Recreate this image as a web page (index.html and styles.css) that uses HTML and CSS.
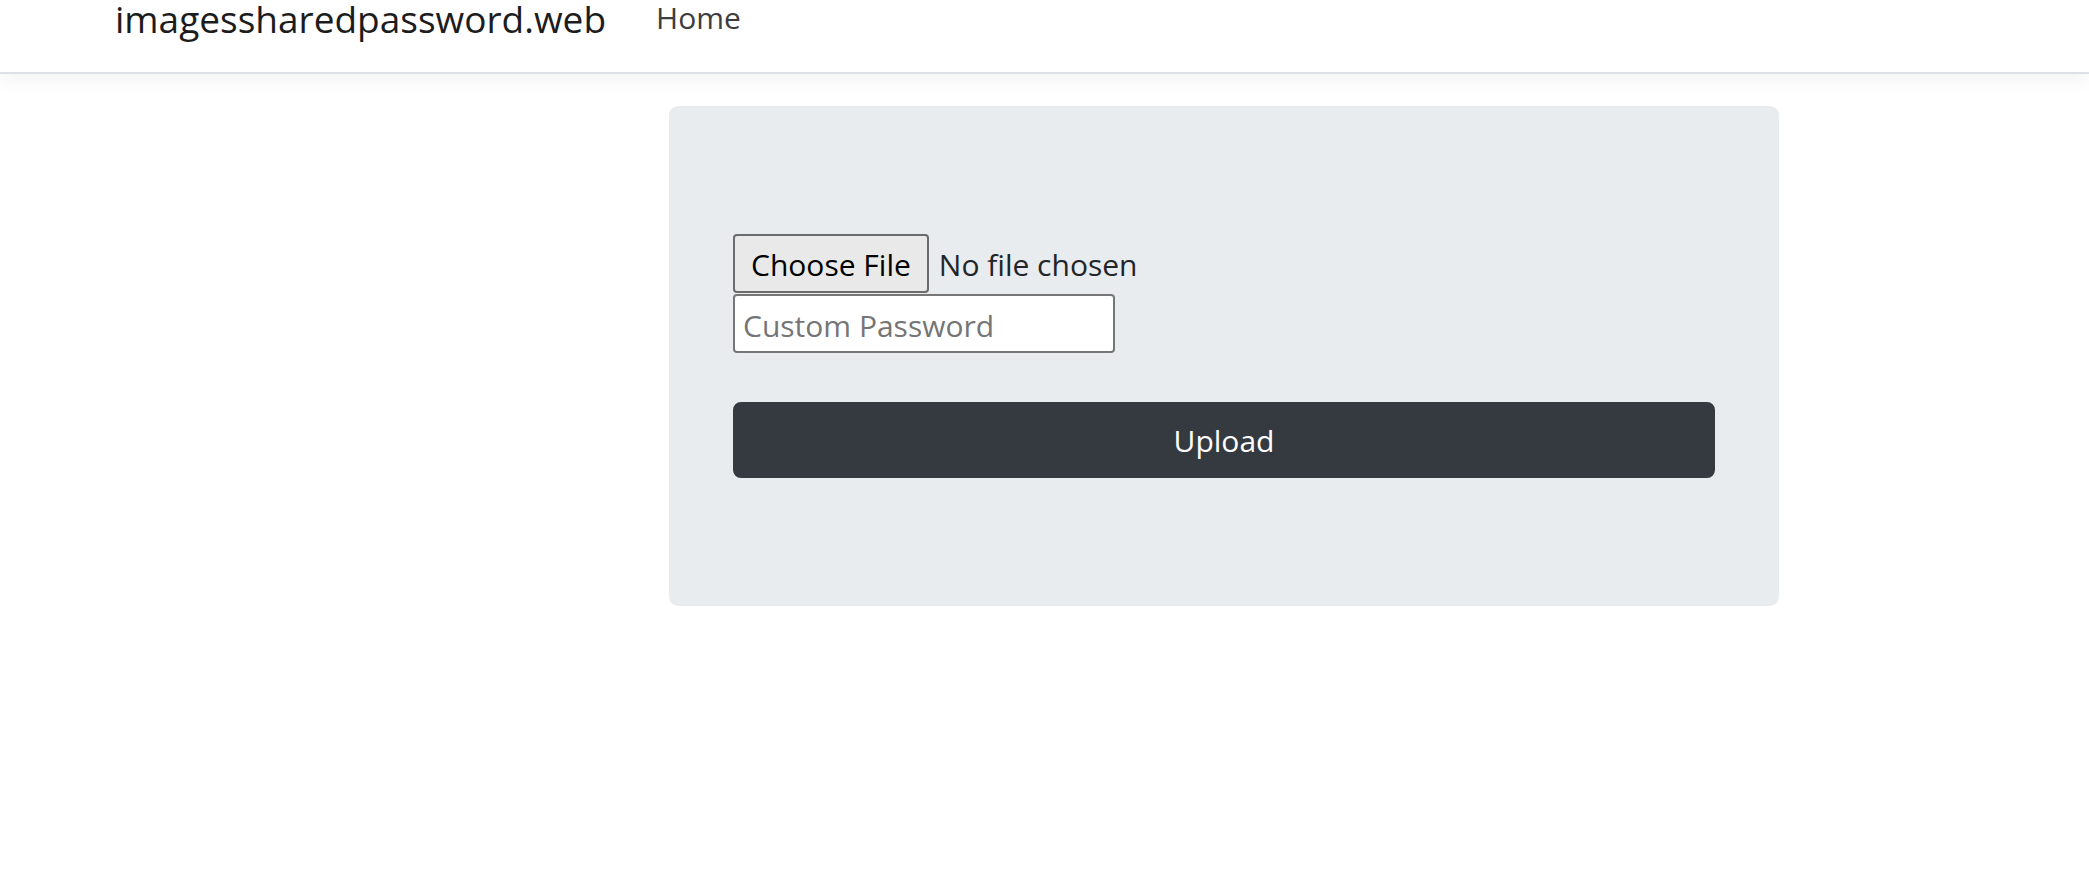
FILE: index.html
```html
<!DOCTYPE html>
<html lang="en">
<head>
<meta charset="utf-8">
<title>imagessharedpassword.web</title>
<link rel="stylesheet" href="styles.css">
</head>
<body>
<header class="navbar">
  <a class="brand" href="#">imagessharedpassword.web</a>
  <nav class="nav">
    <a class="nav-link" href="#">Home</a>
  </nav>
</header>
<main class="main">
  <section class="jumbotron">
    <form class="upload-form">
      <input class="file-input" type="file">
      <input class="pw-input" type="text" placeholder="Custom Password">
      <button class="btn-upload" type="button">Upload</button>
    </form>
  </section>
</main>
</body>
</html>
```

FILE: styles.css
```css
html, body {
  margin: 0;
  padding: 0;
  background: #fff;
}
body {
  font-family: "Open Sans", "Noto Sans", sans-serif;
  color: #212529;
  font-size: 30px;
}
.navbar {
  display: flex;
  align-items: flex-start;
  height: 72px;
  padding-left: 115px;
  background: #fff;
  border-bottom: 2px solid #dee2e6;
  box-shadow: 0 6px 18px rgba(0, 0, 0, 0.05);
  position: relative;
  z-index: 1;
}
.brand {
  font-size: 37px;
  line-height: 36px;
  padding-top: 1px;
  color: #1c1c1c;
  text-decoration: none;
  white-space: nowrap;
}
.nav {
  display: flex;
  margin-left: 50px;
}
.nav-link {
  font-size: 30px;
  line-height: 30px;
  padding-top: 3px;
  color: #3d3d3d;
  text-decoration: none;
}
.main {
  display: flex;
  padding-left: 669px;
  padding-top: 32px;
}
.jumbotron {
  width: 1110px;
  box-sizing: border-box;
  padding: 128px 64px;
  background: #e9ecef;
  border-radius: 9px;
}
.upload-form {
  display: flex;
  flex-direction: column;
  align-items: flex-start;
}
.file-input {
  font-family: inherit;
  font-size: 30px;
  color: #212529;
  height: 59px;
  margin: 0 0 1px 0;
  padding: 0;
}
.file-input::file-selector-button {
  font-family: inherit;
  font-size: 30px;
  height: 59px;
  box-sizing: border-box;
  padding: 2px 16px 0;
  margin-right: 10px;
  background: #e9e9e9;
  color: #000;
  border: 2px solid #6b6b6b;
  border-radius: 4px;
}
.pw-input {
  font-family: inherit;
  font-size: 30px;
  width: 382px;
  height: 59px;
  box-sizing: border-box;
  margin: 0;
  padding: 4px 8px 0;
  border: 2px solid #767676;
  border-radius: 4px;
  background: #fff;
}
.pw-input::placeholder {
  color: #757575;
}
.btn-upload {
  margin-top: 49px;
  width: 100%;
  height: 76px;
  font-family: inherit;
  font-size: 30px;
  line-height: 48px;
  color: #fff;
  background: #343a40;
  border: 2px solid #343a40;
  border-radius: 8px;
  padding: 13px 24px 11px;
}
```
